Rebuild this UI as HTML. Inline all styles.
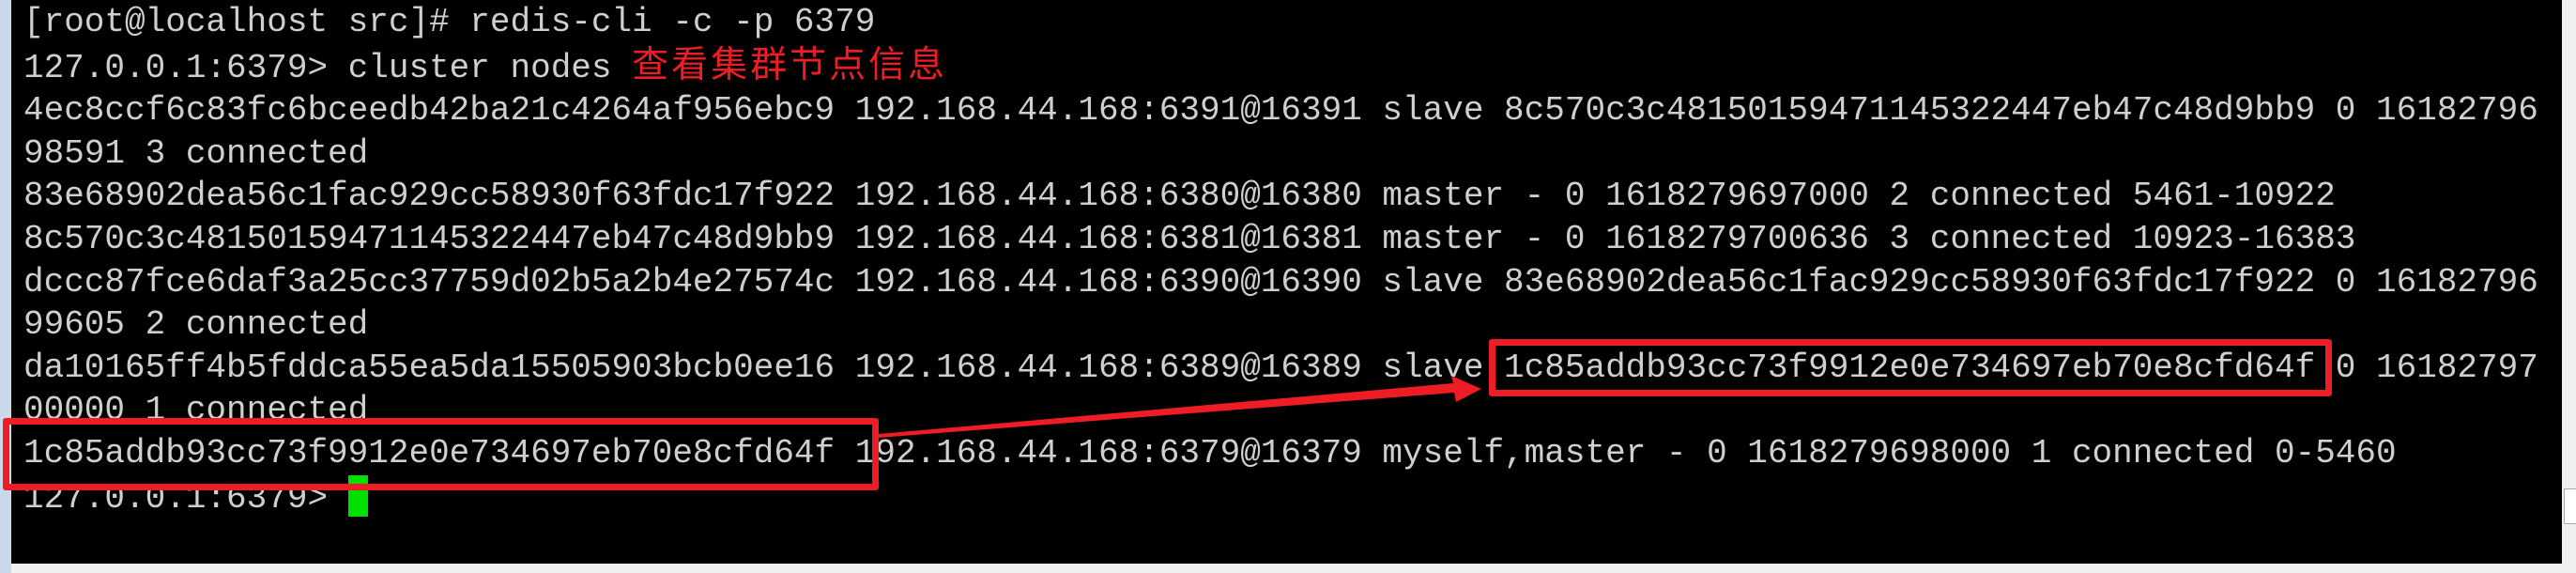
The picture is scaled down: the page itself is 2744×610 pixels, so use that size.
<!DOCTYPE html>
<html><head><meta charset="utf-8"><style>
html,body{margin:0;padding:0;width:2744px;height:610px;overflow:hidden;background:#f0f0f0}
#left{position:absolute;left:0;top:0;width:12px;height:610px;background:#c9d9ea}
#term{position:absolute;left:12px;top:0;width:2717px;height:600px;background:#000}
#txt{position:absolute;left:25px;top:1px;font-family:"Liberation Mono",monospace;font-size:36px;line-height:45.6px;color:#cfcfcf;white-space:pre}
.cn{font-family:"Liberation Sans","Noto Sans CJK SC",sans-serif;color:#ee1c25;font-size:39px;letter-spacing:3px}
.cur{display:inline-block;width:21px;height:44px;background:#00e000;vertical-align:-10px}
.box{position:absolute;border:7px solid #ee1c25;border-radius:3px}
#sb{position:absolute;left:2731px;top:520px;width:13px;height:36px;background:#fff;border:1px solid #aaa}
</style></head><body>
<div id="left"></div>
<div id="term"></div>
<div id="txt">[root@localhost src]# redis-cli -c -p 6379
127.0.0.1:6379&gt; cluster nodes <span class="cn">查看集群节点信息</span>
4ec8ccf6c83fc6bceedb42ba21c4264af956ebc9 192.168.44.168:6391@16391 slave 8c570c3c48150159471145322447eb47c48d9bb9 0 16182796
98591 3 connected
83e68902dea56c1fac929cc58930f63fdc17f922 192.168.44.168:6380@16380 master - 0 1618279697000 2 connected 5461-10922
8c570c3c48150159471145322447eb47c48d9bb9 192.168.44.168:6381@16381 master - 0 1618279700636 3 connected 10923-16383
dccc87fce6daf3a25cc37759d02b5a2b4e27574c 192.168.44.168:6390@16390 slave 83e68902dea56c1fac929cc58930f63fdc17f922 0 16182796
99605 2 connected
da10165ff4b5fddca55ea5da15505903bcb0ee16 192.168.44.168:6389@16389 slave 1c85addb93cc73f9912e0e734697eb70e8cfd64f 0 16182797
00000 1 connected
1c85addb93cc73f9912e0e734697eb70e8cfd64f 192.168.44.168:6379@16379 myself,master - 0 1618279698000 1 connected 0-5460
127.0.0.1:6379&gt; <span class="cur"></span></div>
<div class="box" style="left:1586px;top:361px;width:884px;height:47px"></div>
<div class="box" style="left:3px;top:445px;width:919px;height:63px"></div>
<svg style="position:absolute;left:0;top:0" width="2744" height="610">
<polygon points="936,462 1548,408 1546,400 1578,414 1551,428 1549,418 936,466" fill="#ee1c25"/>
</svg>
<div id="sb"></div>
</body></html>
